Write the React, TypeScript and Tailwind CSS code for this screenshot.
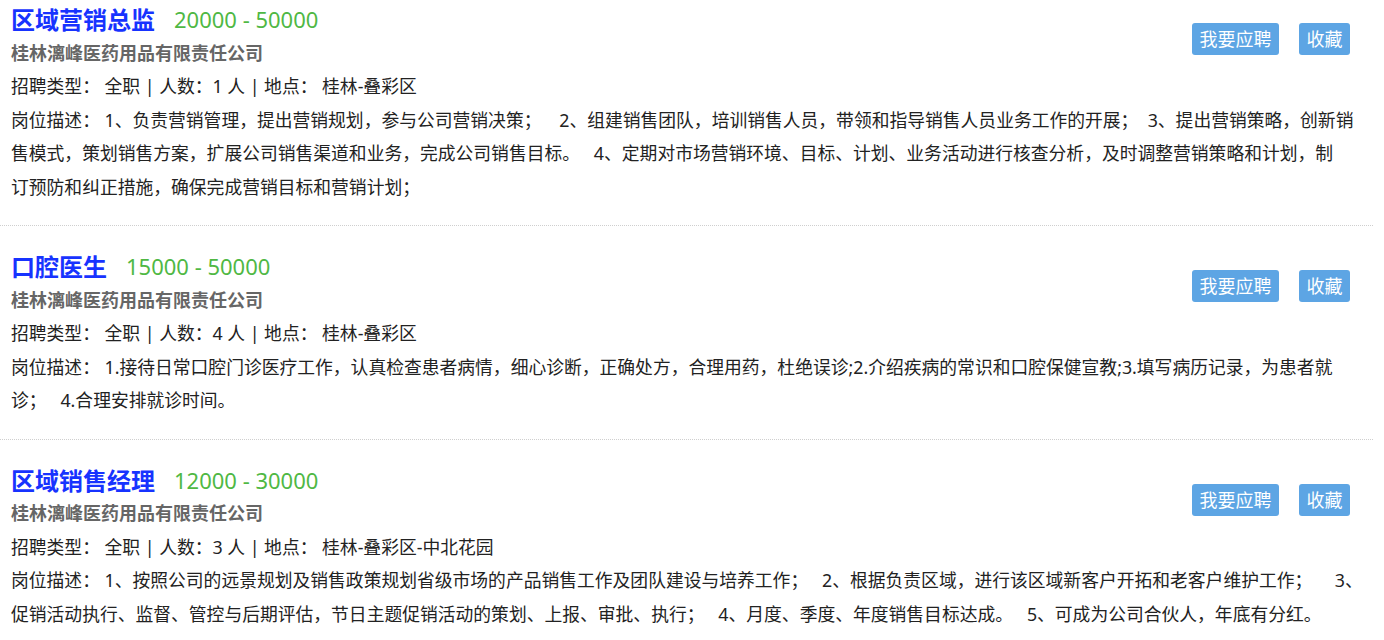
import React from "react";

type Job = {
  title: string;
  salary: string;
  company: string;
  count: string;
  place: string;
  lines: string[];
};

const S = "\u3000";
const N = "\u00a0";

const jobs: Job[] = [
  {
    title: "区域营销总监",
    salary: "20000 - 50000",
    company: "桂林漓峰医药用品有限责任公司",
    count: "1",
    place: "桂林-叠彩区",
    lines: [
      `岗位描述：${N}1、负责营销管理，提出营销规划，参与公司营销决策；${S}2、组建销售团队，培训销售人员，带领和指导销售人员业务工作的开展；${N}${N}3、提出营销策略，创新销`,
      `售模式，策划销售方案，扩展公司销售渠道和业务，完成公司销售目标。${N}${N}${N}4、定期对市场营销环境、目标、计划、业务活动进行核查分析，及时调整营销策略和计划，制`,
      `订预防和纠正措施，确保完成营销目标和营销计划；`,
    ],
  },
  {
    title: "口腔医生",
    salary: "15000 - 50000",
    company: "桂林漓峰医药用品有限责任公司",
    count: "4",
    place: "桂林-叠彩区",
    lines: [
      `岗位描述：${N}1.接待日常口腔门诊医疗工作，认真检查患者病情，细心诊断，正确处方，合理用药，杜绝误诊;2.介绍疾病的常识和口腔保健宣教;3.填写病历记录，为患者就`,
      `诊；${N}${N}${N}4.合理安排就诊时间。`,
    ],
  },
  {
    title: "区域销售经理",
    salary: "12000 - 30000",
    company: "桂林漓峰医药用品有限责任公司",
    count: "3",
    place: "桂林-叠彩区-中北花园",
    lines: [
      `岗位描述：${N}1、按照公司的远景规划及销售政策规划省级市场的产品销售工作及团队建设与培养工作；${N}${N}${N}2、根据负责区域，进行该区域新客户开拓和老客户维护工作；${S}${N}3、`,
      `促销活动执行、监督、管控与后期评估，节日主题促销活动的策划、上报、审批、执行；${N}${N}${N}4、月度、季度、年度销售目标达成。${N}${N}${N}5、可成为公司合伙人，年底有分红。`,
    ],
  },
];

function JobItem({ job, first }: { job: Job; first: boolean }) {
  return (
    <div
      className={
        "border-b border-dotted border-[#cfcfcf] pl-[11px] pr-[12px] pb-[21px] " +
        (first ? "pt-[3px]" : "pt-[24px]")
      }
    >
      <div className="float-right mt-[20px] mr-[11px] flex gap-[20px]">
        <button className="h-[32px] w-[87px] rounded-[3px] bg-[#5da5e4] text-[18px] text-white leading-[32px]">
          我要应聘
        </button>
        <button className="h-[32px] w-[51px] rounded-[3px] bg-[#5da5e4] text-[18px] text-white leading-[32px]">
          收藏
        </button>
      </div>
      <div className="flex h-[33.5px] items-center gap-[19px]">
        <span className="text-[24px] font-bold text-[#1733ff] leading-[33.5px]">
          {job.title}
        </span>
        <span className="text-[22px] text-[#4fb844] leading-[33.5px]">
          {job.salary}
        </span>
      </div>
      <div className="text-[18px] font-bold text-[#666666] leading-[33.5px]">
        {job.company}
      </div>
      <div className="text-[17.8px] text-[#222222] leading-[33.5px] [text-spacing-trim:space-all]">
        {`招聘类型：${N}全职 | 人数：${job.count} 人 | 地点：${N}${job.place}`}
      </div>
      <div className="whitespace-nowrap text-[17.8px] text-[#222222] leading-[33.5px] [text-spacing-trim:space-all]">
        {job.lines.map((l, i) => (
          <React.Fragment key={i}>
            {i > 0 && <br />}
            {l}
          </React.Fragment>
        ))}
      </div>
    </div>
  );
}

export default function App() {
  return (
    <div
      className="h-[640px] w-[1384px] overflow-hidden bg-white"
      style={{ fontFamily: '"Noto Sans", "Noto Sans CJK SC", sans-serif' }}
    >
      <div className="w-[1373px]">
        {jobs.map((j, i) => (
          <JobItem key={i} job={j} first={i === 0} />
        ))}
      </div>
    </div>
  );
}
